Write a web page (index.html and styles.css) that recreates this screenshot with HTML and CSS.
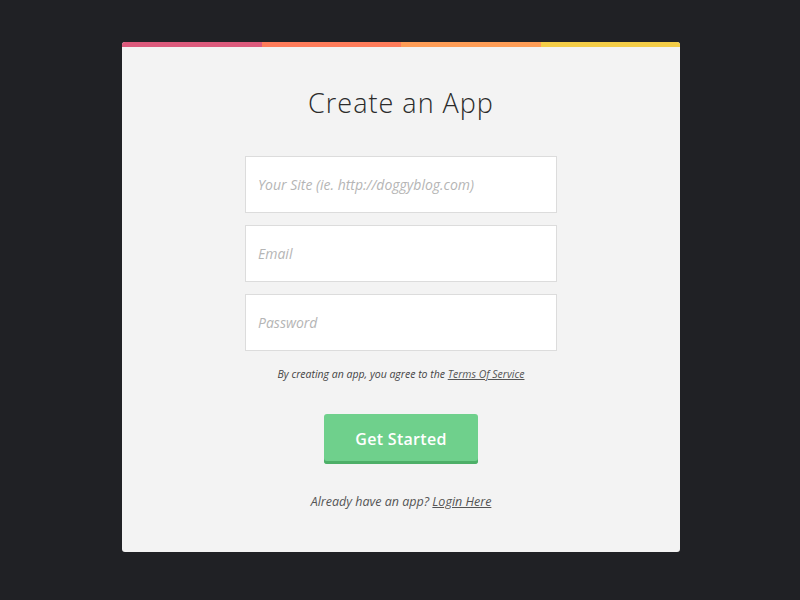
FILE: index.html
```html
<!DOCTYPE html>
<html lang="en">
<head>
    <meta charset="UTF-8">
    <meta name="viewport" content="width=device-width, initial-scale=1.0">
    <title>Create an App</title>
    <link rel="stylesheet" href="styles.css">
</head>
<body>
    <!-- Signup Card -->
    <div class="card">
        <div class="stripe">
            <span class="pink"></span>
            <span class="coral"></span>
            <span class="orange"></span>
            <span class="yellow"></span>
        </div>

        <h1>Create an App</h1>

        <form class="form">
            <input type="text" placeholder="Your Site (ie. http://doggyblog.com)">
            <input type="email" placeholder="Email">
            <input type="password" placeholder="Password">
            <p class="terms">By creating an app, you agree to the <a href="#">Terms Of Service</a></p>
            <button type="button">Get Started</button>
            <p class="login">Already have an app? <a href="#">Login Here</a></p>
        </form>
    </div>
</body>
</html>
```

FILE: styles.css
```css
/* General Styles */
body {
    font-family: "Open Sans", "Liberation Sans", sans-serif;
    margin: 0;
    padding: 42px 0 0;
    background-color: #202125;
    color: #333;
}

/* Card */
.card {
    width: 558px;
    height: 510px;
    margin: 0 auto 0 122px;
    background-color: #f3f3f3;
    border-radius: 3px;
    overflow: hidden;
}

.stripe {
    display: flex;
    height: 5px;
}

.stripe span {
    flex: 1;
}

.pink { background-color: #dc5a7c; }
.coral { background-color: #ff7c5a; }
.orange { background-color: #ff9d56; }
.yellow { background-color: #f4cd47; }

h1 {
    margin: 36px 0 0;
    text-align: center;
    font-weight: 300;
    font-size: 27px;
    letter-spacing: 1px;
    color: #2b2b2b;
    line-height: 40px;
}

/* Form */
.form {
    display: flex;
    flex-direction: column;
    align-items: center;
    margin-top: 33px;
}

.form input {
    box-sizing: border-box;
    width: 312px;
    height: 57px;
    margin-bottom: 12px;
    padding: 0 12px;
    border: 1px solid #dcdcdc;
    background-color: #fff;
    font-family: inherit;
    font-size: 14px;
    font-style: italic;
    outline: none;
}

.form input::placeholder {
    color: #b5b5b5;
}

.terms {
    margin: 4px 0 0;
    font-size: 10.5px;
    font-style: italic;
    color: #444;
}

.terms a,
.login a {
    color: #555;
}

.form button {
    margin-top: 33px;
    width: 154px;
    height: 50px;
    border: none;
    border-radius: 3px;
    background-color: #6fd08c;
    box-shadow: inset 0 -3px 0 #4daf68;
    color: #fff;
    font-family: inherit;
    font-size: 16px;
    font-weight: 600;
    letter-spacing: 0.3px;
    cursor: pointer;
}

.login {
    margin: 29px 0 0;
    font-size: 12.5px;
    font-style: italic;
    color: #555;
}
```
